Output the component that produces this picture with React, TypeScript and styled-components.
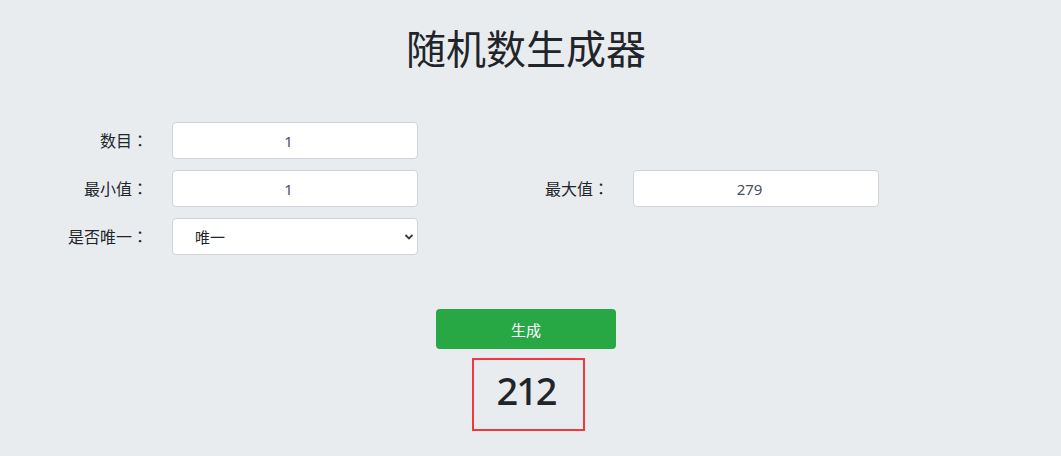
import React, { useState } from "react";
import styled, { createGlobalStyle } from "styled-components";

const GlobalStyle = createGlobalStyle`
  html, body {
    margin: 0;
    padding: 0;
    background: #e9ecef;
  }
  body {
    font-family: "Noto Sans", "Noto Sans CJK SC", sans-serif;
    color: #212529;
  }
`;

const Page = styled.div`
  padding: 23px 9px 0 0;
  display: flex;
  flex-direction: column;
`;

const Title = styled.h1`
  margin: 0;
  text-align: center;
  font-size: 40px;
  line-height: 48px;
  font-weight: 400;
  color: #212529;
  font-family: "Noto Sans CJK SC", sans-serif;
`;

const Form = styled.div`
  margin-top: 51px;
  padding-left: 30px;
  display: flex;
  flex-direction: column;
  gap: 11px;
`;

const Row = styled.div`
  display: flex;
`;

const Field = styled.div`
  width: 461px;
  display: flex;
  align-items: center;
`;

const Label = styled.label`
  width: 118px;
  margin-right: 24px;
  text-align: right;
  font-size: 16px;
  line-height: 37px;
  color: #212529;
  font-family: "Noto Sans CJK SC", sans-serif;
`;

const Colon = styled.span`
  font-family: "Noto Sans CJK TC", sans-serif;
`;

const Input = styled.input`
  box-sizing: border-box;
  width: 246px;
  height: 37px;
  border: 1px solid #ced4da;
  border-radius: 4px;
  background: #fff;
  text-align: center;
  padding: 0 13px 0 0;
  font-size: 15px;
  color: #495057;
  font-family: "Noto Sans", "Noto Sans CJK SC", sans-serif;
  outline: none;
  -moz-appearance: textfield;
  &::-webkit-inner-spin-button,
  &::-webkit-outer-spin-button {
    -webkit-appearance: none;
    margin: 0;
  }
`;

const SelectWrap = styled.div`
  position: relative;
  width: 246px;
  height: 37px;
`;

const Select = styled.select`
  box-sizing: border-box;
  width: 100%;
  height: 100%;
  appearance: none;
  -webkit-appearance: none;
  border: 1px solid #ced4da;
  border-radius: 4px;
  background: #fff;
  padding: 0 30px 0 22px;
  font-size: 15px;
  color: #212529;
  font-family: "Noto Sans CJK SC", sans-serif;
  outline: none;
`;

const Chevron = styled.svg`
  position: absolute;
  right: 4px;
  top: 15px;
  width: 10px;
  height: 8px;
  pointer-events: none;
`;

const Actions = styled.div`
  margin-top: 54px;
  display: flex;
  flex-direction: column;
  align-items: center;
`;

const Button = styled.button`
  width: 180px;
  height: 40px;
  border: none;
  border-radius: 4px;
  background: #28a745;
  color: #fff;
  font-size: 15px;
  font-family: "Noto Sans CJK SC", sans-serif;
  cursor: pointer;
`;

const Result = styled.div`
  margin: 9px 0 0 4px;
  box-sizing: border-box;
  width: 113px;
  height: 73px;
  border: 2px solid #f03a3a;
  display: flex;
  align-items: center;
  justify-content: center;
  font-size: 38px;
  font-weight: 500;
  letter-spacing: -2px;
  color: #212529;
  font-family: "Noto Sans", sans-serif;
  padding: 0 4px 9px 0;
`;

export default function App() {
  const [count, setCount] = useState("1");
  const [min, setMin] = useState("1");
  const [max, setMax] = useState("279");
  const [unique, setUnique] = useState("unique");
  const [result] = useState("212");

  return (
    <>
      <GlobalStyle />
      <Page>
        <Title>随机数生成器</Title>
        <Form>
          <Row>
            <Field>
              <Label>数目<Colon>：</Colon></Label>
              <Input type="number" value={count} onChange={(e) => setCount(e.target.value)} />
            </Field>
          </Row>
          <Row>
            <Field>
              <Label>最小值<Colon>：</Colon></Label>
              <Input type="number" value={min} onChange={(e) => setMin(e.target.value)} />
            </Field>
            <Field>
              <Label>最大值<Colon>：</Colon></Label>
              <Input type="number" value={max} onChange={(e) => setMax(e.target.value)} />
            </Field>
          </Row>
          <Row>
            <Field>
              <Label>是否唯一<Colon>：</Colon></Label>
              <SelectWrap>
                <Select value={unique} onChange={(e) => setUnique(e.target.value)}>
                  <option value="unique">唯一</option>
                  <option value="repeat">可重复</option>
                </Select>
                <Chevron viewBox="0 0 10 8">
                  <path d="M1.5 2 L5 5.5 L8.5 2" fill="none" stroke="#343a40" strokeWidth="1.8" />
                </Chevron>
              </SelectWrap>
            </Field>
          </Row>
        </Form>
        <Actions>
          <Button>生成</Button>
          <Result>{result}</Result>
        </Actions>
      </Page>
    </>
  );
}
